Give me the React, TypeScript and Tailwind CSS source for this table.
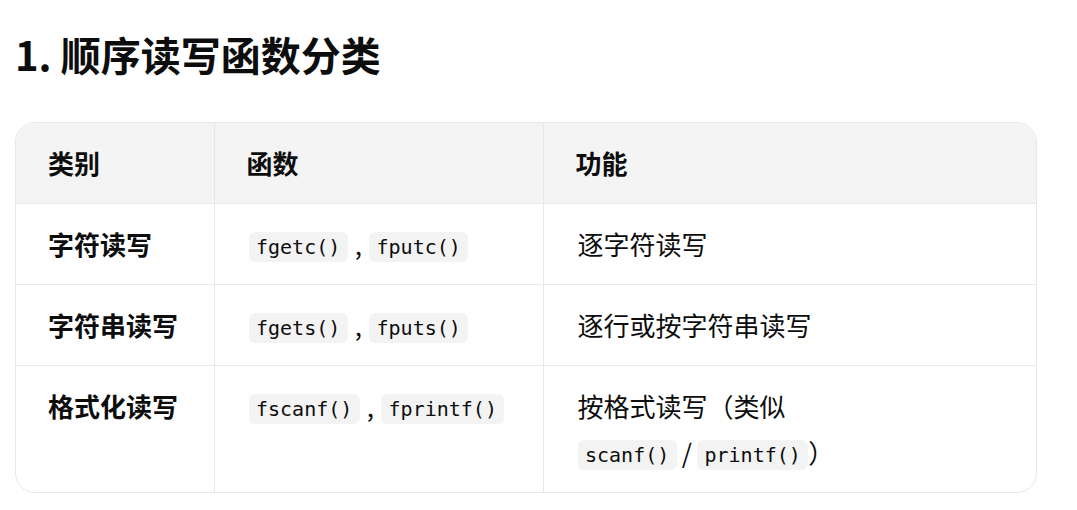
import React from 'react';

const cjk = { fontFamily: '"Noto Sans CJK SC", "Noto Sans", sans-serif' };

function Code({ children }: { children: React.ReactNode }) {
  return (
    <code
      className="inline-block rounded-[6px] bg-[#f3f3f3] px-[7.5px] text-[20px] leading-[30px] text-[#0d0d0d] align-[1px]"
      style={{ fontFamily: '"DejaVu Sans Mono", "Liberation Mono", monospace' }}
    >
      {children}
    </code>
  );
}

const rows = [
  { kind: '字符读写', fns: ['fgetc()', 'fputc()'], desc: <>逐字符读写</> },
  { kind: '字符串读写', fns: ['fgets()', 'fputs()'], desc: <>逐行或按字符串读写</> },
  {
    kind: '格式化读写',
    fns: ['fscanf()', 'fprintf()'],
    desc: (
      <>
        按格式读写（类似
        <br />
        <span className="whitespace-nowrap">
          <Code>scanf()</Code>
          <span className="mx-[5px]">/</span>
          <Code>printf()</Code>）
        </span>
      </>
    ),
  },
];

export default function App() {
  return (
    <div className="min-h-[510px] w-[1077px] bg-white px-[15px] pt-[25px] text-[#0d0d0d]" style={cjk}>
      <h1 className="text-[40px] font-bold leading-[58px]">1. 顺序读写函数分类</h1>

      <div className="mt-[39px] w-[1022px] overflow-hidden rounded-[20px] border border-[#e8e8e8]">
        <table className="w-full table-fixed border-collapse text-[26px] leading-[45.5px]">
          <colgroup>
            <col className="w-[198px]" />
            <col className="w-[329px]" />
            <col />
          </colgroup>
          <thead>
            <tr className="bg-[#f4f4f4]">
              <th className="border-r border-b border-[#e8e8e8] px-[32px] py-[17.25px] text-left font-bold">类别</th>
              <th className="border-r border-b border-[#e8e8e8] px-[32px] py-[17.25px] text-left font-bold">函数</th>
              <th className="border-b border-[#e8e8e8] px-[32px] py-[17.25px] text-left font-bold">功能</th>
            </tr>
          </thead>
          <tbody>
            {rows.map((r, i) => {
              const last = i === rows.length - 1;
              const b = last ? '' : 'border-b';
              return (
                <tr key={r.kind}>
                  <td className={`border-r ${b} border-[#e8e8e8] px-[32px] py-[17.25px] align-top font-bold`}>{r.kind}</td>
                  <td className={`border-r ${b} border-[#e8e8e8] px-[34px] py-[17.25px] align-top`}>
                    <Code>{r.fns[0]}</Code>
                    <span className="mx-[7px]">,</span>
                    <Code>{r.fns[1]}</Code>
                  </td>
                  <td className={`${b} border-[#e8e8e8] px-[34px] py-[17.25px] align-top`}>{r.desc}</td>
                </tr>
              );
            })}
          </tbody>
        </table>
      </div>
    </div>
  );
}
